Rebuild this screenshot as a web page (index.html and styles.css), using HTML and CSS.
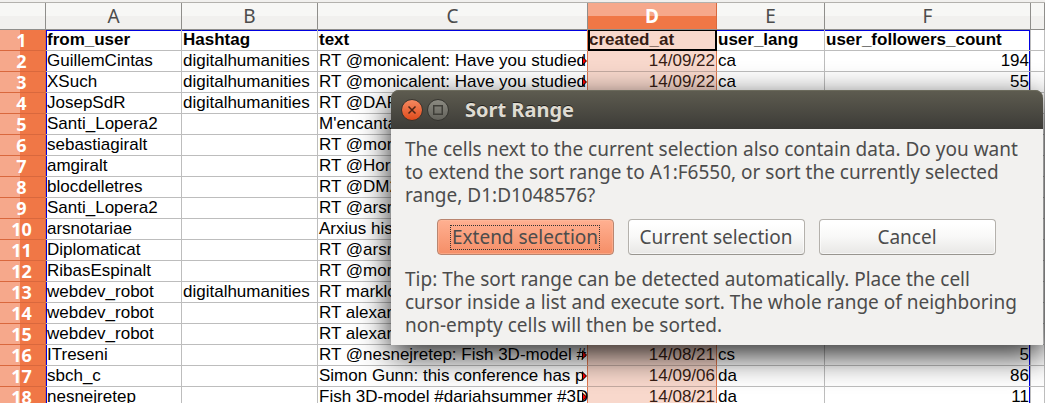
FILE: index.html
```html
<!DOCTYPE html>
<html lang="en">
<head>
<meta charset="utf-8">
<title>Sort Range</title>
<link rel="stylesheet" href="styles.css">
<script src="sheet.js" defer></script>
</head>
<body>
<main class="sheet">
  <table class="grid">
    <colgroup>
      <col class="w-head"><col class="w-user"><col class="w-user"><col class="w-text"><col class="w-date"><col class="w-lang"><col class="w-count"><col>
    </colgroup>
    <thead>
      <tr><td class="corner"></td><th scope="col">A</th><th scope="col">B</th><th scope="col">C</th><th scope="col" class="selected">D</th><th scope="col">E</th><th scope="col">F</th><th scope="col"></th></tr>
    </thead>
    <tbody id="rows"></tbody>
  </table>
</main>
<section class="dialog" role="dialog" aria-labelledby="dialog-title">
  <header class="titlebar">
    <button class="window-button" type="button" aria-label="Close">
      <svg viewBox="0 0 22 22" width="22" height="22">
        <defs><linearGradient id="close-fill" x1="0" y1="0" x2="0" y2="1"><stop offset="0" stop-color="#f58a62"/><stop offset="1" stop-color="#df4a1a"/></linearGradient></defs>
        <circle cx="11" cy="11" r="10.5" fill="url(#close-fill)" stroke="#34332e"/>
        <path d="M7.5 7.5l7 7M14.5 7.5l-7 7" stroke="#4b2416" stroke-width="1.5" fill="none"/>
      </svg>
    </button>
    <button class="window-button" type="button" aria-label="Maximize">
      <svg viewBox="0 0 22 22" width="22" height="22">
        <defs><linearGradient id="max-fill" x1="0" y1="0" x2="0" y2="1"><stop offset="0" stop-color="#8c8b82"/><stop offset="1" stop-color="#62615a"/></linearGradient></defs>
        <circle cx="11" cy="11" r="10.5" fill="url(#max-fill)" stroke="#34332e"/>
        <rect x="6.75" y="6.75" width="8.5" height="8.5" stroke="#3f3e38" stroke-width="1.5" fill="none"/>
      </svg>
    </button>
    <h1 class="title" id="dialog-title">Sort Range</h1>
  </header>
  <div class="content">
    <p>The cells next to the current selection also contain data. Do you want<br>to extend the sort range to A1:F6550, or sort the currently selected<br>range, D1:D1048576?</p>
    <div class="actions">
      <button class="action action-default" type="button"><span class="focus">Extend selection</span></button>
      <button class="action" type="button">Current selection</button>
      <button class="action" type="button">Cancel</button>
    </div>
    <p>Tip: The sort range can be detected automatically. Place the cell<br>cursor inside a list and execute sort. The whole range of neighboring<br>non-empty cells will then be sorted.</p>
  </div>
</section>
</body>
</html>
```
FILE: styles.css
```css
body {
  margin: 0;
  background: #fff;
  overflow: hidden;
  height: 100vh;
  font-family: "Liberation Sans", Arial, sans-serif;
}
.sheet {
  border-top: 2px solid #f1f0ee;
}
.grid {
  width: 100%;
  table-layout: fixed;
  border-collapse: separate;
  border-spacing: 0;
  border-top: 1px solid #b3b1ad;
  font-size: 17px;
  line-height: 20px;
  color: #000;
}
.w-head { width: 46px; }
.w-user { width: 136px; }
.w-text { width: 270px; }
.w-date { width: 129px; }
.w-lang { width: 108px; }
.w-count { width: 206px; }
.grid th, .grid td {
  box-sizing: border-box;
  padding: 0 1px;
  border-right: 1px solid #bdbdbd;
  border-bottom: 1px solid #bdbdbd;
  white-space: nowrap;
  text-align: left;
}
.grid thead th, .grid thead .corner {
  height: 27px;
  border-right-color: #8f8e8b;
  border-bottom-color: #8f8e8b;
  background: linear-gradient(#f7f7f5 50%, #f1f0ee 50%);
  color: #4c4c4c;
  font: 400 19px/26px "Noto Sans", "Open Sans", sans-serif;
  text-align: center;
}
.grid thead .selected {
  background: linear-gradient(#f6a88b 50%, #f07746 50%);
  border-right-color: #d9683d;
  color: #fff;
  font-weight: 700;
}
.grid tbody th {
  background: linear-gradient(90deg, #f6a88b 20px, #f07746 20px);
  border-right-color: #d9683d;
  border-bottom-color: #d9683d;
  color: #fff;
  font: 700 18px/20px "Noto Sans", "Open Sans", sans-serif;
  text-align: center;
  padding-right: 3px;
}
.grid tbody .user { box-shadow: inset 1px 0 #0000e0; }
.grid tbody .count { box-shadow: inset -1px 0 #0000e0; }
.grid .names td { font-weight: 700; box-shadow: inset 0 1px #0000e0; }
.grid .names .user { box-shadow: inset 1px 1px #0000e0; }
.grid .names .count { box-shadow: inset -1px 1px #0000e0; text-align: left; }
.grid .names .spare { box-shadow: none; }
.grid .text { position: relative; border-right-color: #e0774d; }
.grid .date {
  background: #f8d8cc;
  border-right-color: #e0774d;
  border-bottom-color: #c4aaa1;
  color: #371d14;
  text-align: right;
}
.grid .names .date {
  border-color: #000;
  box-shadow: inset 2px 1px #000, inset -1px -1px #000;
  text-align: left;
}
.grid .count { text-align: right; }
.clip-mark { position: absolute; right: 0; top: 5px; }

.dialog {
  position: absolute;
  top: 90px;
  left: 391px;
  right: 2px;
  border-radius: 8px 8px 0 0;
  background: #f2f1ef;
  box-shadow: 0 10px 32px rgba(0, 0, 0, .85);
  color: #4c4c4c;
  font: 19px/23px "Noto Sans", "Open Sans", sans-serif;
}
.titlebar {
  display: flex;
  align-items: center;
  gap: 4px;
  height: 39px;
  padding: 0 10px;
  border-radius: 8px 8px 0 0;
  background: linear-gradient(#5e5c50, #3c3b37);
  box-shadow: inset 0 1px #6b6a5c;
}
.window-button {
  width: 22px;
  height: 22px;
  padding: 0;
  border: 0;
  border-radius: 50%;
  background: none;
}
.window-button svg { display: block; }
.title {
  margin: 0 0 0 12px;
  color: #dfdbd2;
  font-size: 20px;
  font-weight: 700;
  text-shadow: 0 -1px #24231f;
}
.content { padding: 9px 14px 8px; }
.content p { margin: 0; white-space: nowrap; }
.actions {
  display: flex;
  justify-content: center;
  gap: 14px;
  margin: 12px 2px 13px 0;
}
.action {
  width: 177px;
  height: 36px;
  padding: 0;
  border: 1px solid #b4b1ac;
  border-bottom-color: #98958f;
  border-radius: 4px;
  background: linear-gradient(#fff 10%, #f8f8f7 50%, #e8e7e5);
  box-shadow: inset 0 0 0 1px rgba(255, 255, 255, .6);
  color: #4c4c4c;
  font: inherit;
  white-space: nowrap;
}
.action-default {
  border-color: #b98570;
  background: linear-gradient(#ffb091, #f58e67);
  box-shadow: inset 0 0 0 1px rgba(255, 190, 160, .5);
}
.focus { display: inline-block; padding: 0 1px; border: 1px dotted #333; }
```
FILE: sheet.js
```js
const rows = [
  ["from_user", "Hashtag", "text", "created_at", "user_lang", "user_followers_count"],
  ["GuillemCintas", "digitalhumanities", "RT @monicalent: Have you studied", "14/09/22", "ca", "194"],
  ["XSuch", "digitalhumanities", "RT @monicalent: Have you studied", "14/09/22", "ca", "55"],
  ["JosepSdR", "digitalhumanities", "RT @DAR", "", "", ""],
  ["Santi_Lopera2", "", "M'encanta", "", "", ""],
  ["sebastiagiralt", "", "RT @moni", "", "", ""],
  ["amgiralt", "", "RT @Horst", "", "", ""],
  ["blocdelletres", "", "RT @DM2", "", "", ""],
  ["Santi_Lopera2", "", "RT @arsn", "", "", ""],
  ["arsnotariae", "", "Arxius hist", "", "", ""],
  ["Diplomaticat", "", "RT @arsn", "", "", ""],
  ["RibasEspinalt", "", "RT @moni", "", "", ""],
  ["webdev_robot", "digitalhumanities", "RT marklo", "", "", ""],
  ["webdev_robot", "", "RT alexan", "", "", ""],
  ["webdev_robot", "", "RT alexan", "", "", ""],
  ["ITreseni", "", "RT @nesnejretep: Fish 3D-model #", "14/08/21", "cs", "5"],
  ["sbch_c", "", "Simon Gunn: this conference has p", "14/09/06", "da", "86"],
  ["nesnejretep", "", "Fish 3D-model #dariahsummer #3D", "14/08/21", "da", "11"]
];
const names = ["user", "tag", "text", "date", "lang", "count"];
const mark = '<svg class="clip-mark" width="5" height="10" viewBox="0 0 5 10"><path d="M0 0L5 5L0 10Z" fill="#000"/><path d="M1 2L4 5L1 8Z" fill="#f00"/></svg>';
const body = document.getElementById("rows");

rows.forEach((cells, index) => {
  const tr = body.insertRow();
  if (index === 0) tr.className = "names";
  const head = document.createElement("th");
  head.scope = "row";
  head.textContent = index + 1;
  tr.append(head);
  cells.forEach((value, column) => {
    const td = tr.insertCell();
    td.className = names[column];
    td.textContent = value;
    if (column === 2 && value.length > 20) td.insertAdjacentHTML("beforeend", mark);
  });
  tr.insertCell().className = "spare";
});
```
